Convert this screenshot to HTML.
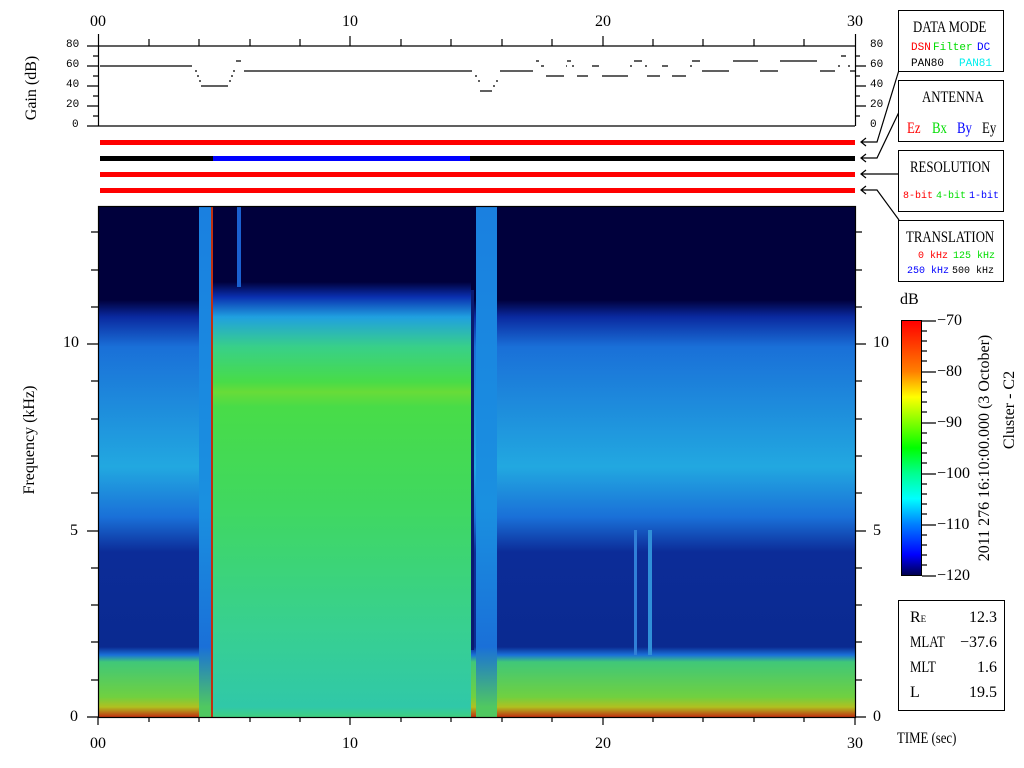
<!DOCTYPE html>
<html><head><meta charset="utf-8"><style>
body{margin:0;background:#fff;width:1024px;height:768px;position:relative;overflow:hidden;font-family:"Liberation Serif",serif;color:#000}
.a{position:absolute}
.t{position:absolute;font-size:16px;line-height:16px;white-space:nowrap}
.n{transform:scaleX(.8);transform-origin:left top}
.s{position:absolute;font-family:"Liberation Mono",monospace;font-size:11px;line-height:11px;white-space:nowrap}
.box{position:absolute;border:1px solid #000;background:#fff}
</style></head><body>

<div class="a" style="left:99px;top:207px;width:756px;height:510px;background:linear-gradient(to bottom,#00003c 0,#00003c 93px,#0a2aa0 110px,#1a70d8 140px,#22a8e0 260px,#1a70d8 310px,#0c2c98 345px,#0a2a90 440px,#1a70d8 448px,#40c878 455px,#70d040 490px,#b0c020 500px,#c03010 510px)"></div>
<div class="a" style="left:213px;top:207px;width:258px;height:510px;background:linear-gradient(to bottom,#00003c 0,#00003c 75px,#0a30b0 90px,#20a0e0 110px,#38d088 140px,#48dc48 175px,#68dc38 185px,#48dc48 200px,#40d860 300px,#38d090 420px,#30c8a8 500px,#40d080 510px)"></div>
<div class="a" style="left:199px;top:207px;width:13px;height:510px;background:linear-gradient(to bottom,#1a80e0,#1a90e0 300px,#1a70d8 440px,#50c860 500px)"></div>
<div class="a" style="left:211px;top:207px;width:2px;height:510px;background:#c03010"></div>
<div class="a" style="left:237px;top:207px;width:4px;height:80px;background:#1a60d0"></div>
<div class="a" style="left:476px;top:207px;width:21px;height:510px;background:linear-gradient(to bottom,#1a80e0,#1a90e0 300px,#1a70d8 440px,#50c860 500px)"></div>
<div class="a" style="left:471px;top:290px;width:3px;height:360px;background:#0a1a70"></div>
<div class="a" style="left:634px;top:530px;width:3px;height:125px;background:#3080d8"></div>
<div class="a" style="left:648px;top:530px;width:4px;height:125px;background:#3090d8"></div>

<svg class="a" style="left:0;top:0" width="1024" height="768">
<g stroke="#000" stroke-width="1.2" fill="none">
<line x1="87" y1="46" x2="855" y2="46"/><line x1="87" y1="126" x2="855" y2="126"/>
<line x1="98.5" y1="34" x2="98.5" y2="126"/><line x1="855.5" y1="34" x2="855.5" y2="126"/>
<path d="M87 66h11M87 86h11M87 106h11M93 56h5M93 76h5M93 96h5M93 116h5M855 66h11M855 86h11M855 106h11M855 56h5M855 76h5M855 96h5M855 116h5"/>
<path d="M149 46v-7M199 46v-7M250 46v-7M300 46v-7M350 46v-10M401 46v-7M451 46v-7M502 46v-7M552 46v-7M603 46v-10M653 46v-7M703 46v-7M754 46v-7M804 46v-7"/>
<path d="M100 66H192M195 71h2M197 76h2M199 81h2M201 86H228M229 81h2M231 76h2M233 71h2M236 61h5M244 71H472M475 76h2M478 81h2M480 91h12M493 86h2M496 81h2M500 71H533M536 61h3M541 66h3M546 76h18M566 66h1M567 61h4M572 66h2M577 76h11M592 66h7M602 76h26M630 66h2M634 61h8M645 66h2M647 76h13M662 66h6M672 76h14M690 66h2M692 61h8M702 71h27M733 61h25M760 71h18M780 61h37M820 71h15M838 66h2M841 56h5M848 66h2M850 71h5"/>
<rect x="98.5" y="206.5" width="757" height="511"/>
<path d="M98 717v8M149 717v5M199 717v5M250 717v5M300 717v5M350 717v8M401 717v5M451 717v5M502 717v5M552 717v5M603 717v8M653 717v5M703 717v5M754 717v5M804 717v5M855 717v8"/>
<path d="M87 717h11M91 680h7M91 642h7M91 605h7M91 568h7M87 531h11M91 493h7M91 456h7M91 419h7M91 381h7M87 344h11M91 307h7M91 270h7M91 232h7"/>
<path d="M855 717h11M855 680h7M855 642h7M855 605h7M855 568h7M855 531h11M855 493h7M855 456h7M855 419h7M855 381h7M855 344h11M855 307h7M855 270h7M855 232h7"/>
<path d="M922 321h14M922 372h14M922 423h14M922 474h14M922 525h14M922 576h14M922 331h5M922 341h5M922 351h5M922 361h5M922 382h5M922 392h5M922 402h5M922 412h5M922 433h5M922 443h5M922 453h5M922 463h5M922 484h5M922 494h5M922 504h5M922 514h5M922 535h5M922 545h5M922 555h5M922 565h5"/>
<path d="M899 70L877 142H861M866 138l-5 4 5 4M899 112L877 158H861M866 154l-5 4 5 4M899 174H861M866 170l-5 4 5 4M899 220L877 190H861M866 186l-5 4 5 4"/>
</g>
</svg>

<div class="a" style="left:100px;top:140px;width:755px;height:5px;background:#f00"></div>
<div class="a" style="left:100px;top:156px;width:113px;height:5px;background:#000"></div>
<div class="a" style="left:213px;top:156px;width:257px;height:5px;background:#00f"></div>
<div class="a" style="left:470px;top:156px;width:385px;height:5px;background:#000"></div>
<div class="a" style="left:100px;top:172px;width:755px;height:5px;background:#f00"></div>
<div class="a" style="left:100px;top:188px;width:755px;height:5px;background:#f00"></div>

<div class="t" style="left:90px;top:14px">00</div><div class="t" style="left:342px;top:14px">10</div>
<div class="t" style="left:595px;top:14px">20</div><div class="t" style="left:847px;top:14px">30</div>
<div class="t" style="left:90px;top:736px">00</div><div class="t" style="left:342px;top:736px">10</div>
<div class="t" style="left:595px;top:736px">20</div><div class="t" style="left:847px;top:736px">30</div>

<div class="s" style="left:66px;top:40px">80</div><div class="s" style="left:66px;top:60px">60</div>
<div class="s" style="left:66px;top:80px">40</div><div class="s" style="left:66px;top:100px">20</div>
<div class="s" style="left:72px;top:120px">0</div>
<div class="s" style="left:870px;top:40px">80</div><div class="s" style="left:870px;top:60px">60</div>
<div class="s" style="left:870px;top:80px">40</div><div class="s" style="left:870px;top:100px">20</div>
<div class="s" style="left:870px;top:120px">0</div>
<div class="t" style="left:-8px;top:80px;transform:rotate(-90deg);width:80px;text-align:center">Gain (dB)</div>

<div class="t" style="left:63px;top:335px">10</div><div class="t" style="left:70px;top:523px">5</div><div class="t" style="left:70px;top:709px">0</div>
<div class="t" style="left:873px;top:335px">10</div><div class="t" style="left:873px;top:523px">5</div><div class="t" style="left:873px;top:709px">0</div>
<div class="t" style="left:-30px;top:432px;transform:rotate(-90deg);width:120px;text-align:center">Frequency (kHz)</div>

<div class="box" style="left:898px;top:10px;width:104px;height:60px">
<div class="t n" style="left:14px;top:9px">DATA MODE</div>
<div class="s" style="left:12px;top:32px;color:#f00">DSN</div><div class="s" style="left:34px;top:32px;color:#0d0">Filter</div><div class="s" style="left:78px;top:32px;color:#00f">DC</div>
<div class="s" style="left:12px;top:48px">PAN80</div><div class="s" style="left:60px;top:48px;color:#0ee">PAN81</div></div>
<div class="box" style="left:898px;top:80px;width:104px;height:60px">
<div class="t n" style="left:23px;top:9px">ANTENNA</div>
<div class="t n" style="left:8px;top:40px;color:#f00">Ez</div><div class="t n" style="left:33px;top:40px;color:#0d0">Bx</div><div class="t n" style="left:58px;top:40px;color:#00f">By</div><div class="t n" style="left:83px;top:40px">Ey</div></div>
<div class="box" style="left:898px;top:150px;width:104px;height:60px">
<div class="t n" style="left:11px;top:9px">RESOLUTION</div>
<div class="s" style="left:4px;top:40px;color:#f00;font-size:10px">8-bit</div><div class="s" style="left:37px;top:40px;color:#0d0;font-size:10px">4-bit</div><div class="s" style="left:70px;top:40px;color:#00f;font-size:10px">1-bit</div></div>
<div class="box" style="left:898px;top:220px;width:104px;height:60px">
<div class="t n" style="left:7px;top:9px">TRANSLATION</div>
<div class="s" style="left:19px;top:30px;color:#f00;font-size:10px">0 kHz</div><div class="s" style="left:54px;top:30px;color:#0d0;font-size:10px">125 kHz</div>
<div class="s" style="left:8px;top:45px;color:#00f;font-size:10px">250 kHz</div><div class="s" style="left:53px;top:45px;font-size:10px">500 kHz</div></div>

<div class="t" style="left:900px;top:292px">dB</div>
<div class="a" style="left:901px;top:320px;width:21px;height:256px;border:1px solid #000;box-sizing:border-box;background:linear-gradient(to bottom,#ff0000 0%,#ff8000 20%,#ffff00 30%,#00ff00 50%,#00ff90 60%,#00ffff 70%,#0080ff 80%,#0000ff 92%,#000050 100%)"></div>
<div class="t" style="left:937px;top:313px">−70</div><div class="t" style="left:937px;top:364px">−80</div>
<div class="t" style="left:937px;top:415px">−90</div><div class="t" style="left:937px;top:466px">−100</div>
<div class="t" style="left:937px;top:517px">−110</div><div class="t" style="left:937px;top:568px">−120</div>
<div class="t" style="left:860px;top:440px;transform:rotate(-90deg);width:250px;text-align:center">2011 276 16:10:00.000 (3 October)</div>
<div class="t" style="left:935px;top:402px;transform:rotate(-90deg);width:150px;text-align:center">Cluster - C2</div>

<div class="box" style="left:898px;top:600px;width:105px;height:109px">
<div class="t" style="left:11px;top:9px">R<span style="font-size:9px">E</span></div><div class="t" style="left:55px;top:9px;width:43px;text-align:right">12.3</div>
<div class="t n" style="left:11px;top:34px">MLAT</div><div class="t" style="left:55px;top:34px;width:43px;text-align:right">−37.6</div>
<div class="t n" style="left:11px;top:59px">MLT</div><div class="t" style="left:55px;top:59px;width:43px;text-align:right">1.6</div>
<div class="t" style="left:11px;top:84px">L</div><div class="t" style="left:55px;top:84px;width:43px;text-align:right">19.5</div></div>
<div class="t n" style="left:897px;top:731px">TIME (sec)</div>
</body></html>
